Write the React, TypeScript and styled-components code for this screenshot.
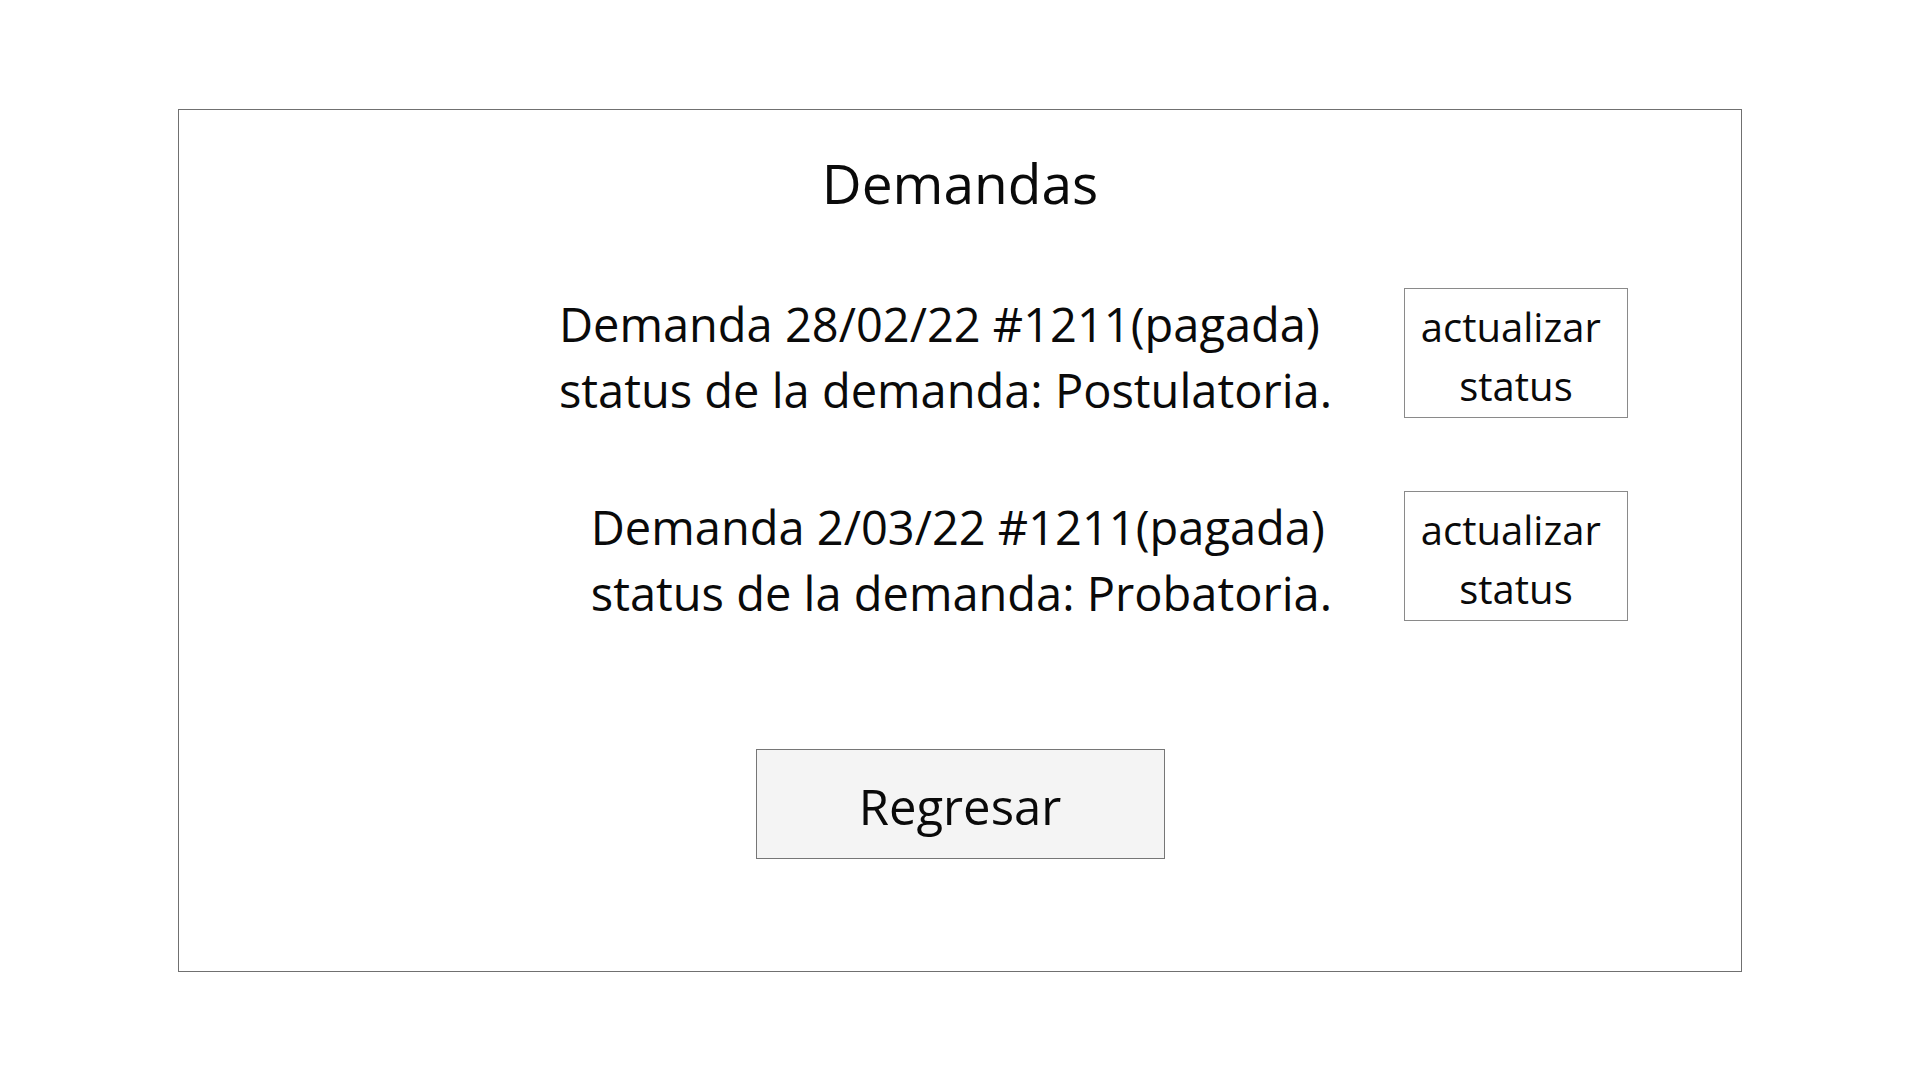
import React from "react";
import styled, { createGlobalStyle } from "styled-components";

const GlobalStyle = createGlobalStyle`
  html, body {
    margin: 0;
    padding: 0;
    background: #ffffff;
  }
  body {
    font-family: "Open Sans", "Noto Sans", "Liberation Sans", sans-serif;
    color: #0a0a0a;
  }
`;

const Page = styled.div`
  width: 1920px;
  height: 1080px;
  box-sizing: border-box;
  padding: 109px 0 0 178px;
  background: #ffffff;
`;

const Panel = styled.section`
  width: 1564px;
  height: 863px;
  box-sizing: border-box;
  border: 1px solid #707070;
  display: flex;
  flex-direction: column;
  padding-top: 36px;
`;

const Title = styled.h1`
  margin: 0;
  font-size: 55px;
  font-weight: 400;
  line-height: 74px;
  text-align: center;
  color: #0a0a0a;
`;

const List = styled.div`
  display: flex;
  flex-direction: column;
  gap: 73px;
  margin-top: 68px;
`;

const Row = styled.div`
  display: flex;
  justify-content: flex-end;
  align-items: flex-start;
  gap: 72px;
  padding-right: 113px;
  height: 130px;
`;

const Info = styled.div`
  padding-top: 3px;
  font-size: 47px;
  line-height: 66px;
  white-space: nowrap;
`;

const Line = styled.div``;

const StatusButton = styled.button`
  width: 224px;
  height: 130px;
  box-sizing: border-box;
  border: 1px solid #8a8a8a;
  background: #ffffff;
  padding: 8px 0 0;
  margin: 0;
  font-family: inherit;
  font-size: 40px;
  line-height: 59px;
  color: #0a0a0a;
  text-align: center;
  display: flex;
  flex-direction: column;
  align-items: center;
  justify-content: flex-start;
  cursor: pointer;
`;

const Footer = styled.div`
  display: flex;
  justify-content: center;
  margin-top: 128px;
`;

const BackButton = styled.button`
  width: 409px;
  height: 110px;
  box-sizing: border-box;
  border: 1px solid #767676;
  background: #f4f4f4;
  padding: 23px 0 0;
  margin: 0;
  font-family: inherit;
  font-size: 49px;
  line-height: 66px;
  color: #0a0a0a;
  display: flex;
  justify-content: center;
  align-items: flex-start;
  cursor: pointer;
`;

type Demanda = { fecha: string; numero: string; estado: string; status: string };

const demandas: Demanda[] = [
  { fecha: "28/02/22", numero: "#1211", estado: "pagada", status: "Postulatoria." },
  { fecha: "2/03/22", numero: "#1211", estado: "pagada", status: "Probatoria." },
];

export default function App() {
  return (
    <>
      <GlobalStyle />
      <Page>
        <Panel>
          <Title>Demandas</Title>
          <List>
            {demandas.map((d, i) => (
              <Row key={i}>
                <Info>
                  <Line>
                    Demanda {d.fecha} {d.numero}({d.estado})
                  </Line>
                  <Line>status de la demanda: {d.status}</Line>
                </Info>
                <StatusButton>
                  <span>actualizar&nbsp;</span>
                  <span>status</span>
                </StatusButton>
              </Row>
            ))}
          </List>
          <Footer>
            <BackButton>Regresar</BackButton>
          </Footer>
        </Panel>
      </Page>
    </>
  );
}
